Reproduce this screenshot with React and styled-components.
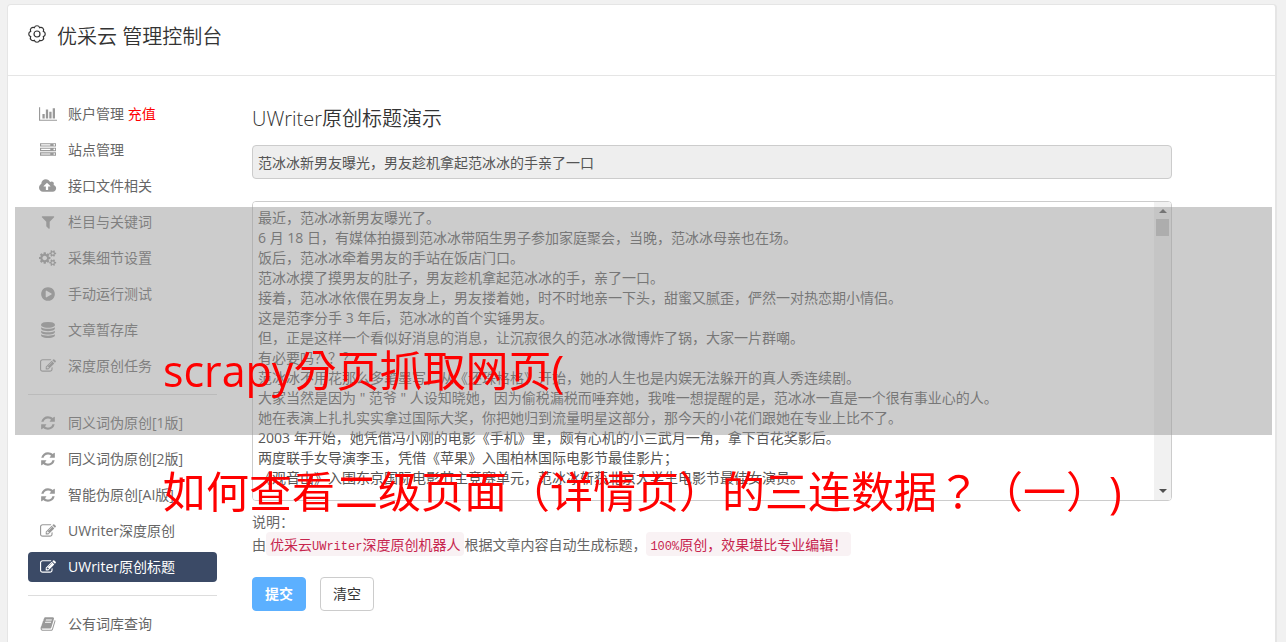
import { useState } from "react";
import styled, { createGlobalStyle, css } from "styled-components";

const ICONS = {
	chart: {
		width: 2048,
		path: "M640 896v512h-256v-512h256zm384-512v1024h-256v-1024h256zm1024 1152v128h-2048v-1536h128v1408h1920zm-640-896v768h-256v-768h256zm384-384v1152h-256v-1152h256z",
	},
	server: {
		width: 1792,
		path: "M128 1408h1024v-128h-1024v128zm0-512h1024v-128h-1024v128zm1568 448q0-40-28-68t-68-28-68 28-28 68 28 68 68 28 68-28 28-68zm-1568-960h1024v-128h-1024v128zm1568 448q0-40-28-68t-68-28-68 28-28 68 28 68 68 28 68-28 28-68zm0-512q0-40-28-68t-68-28-68 28-28 68 28 68 68 28 68-28 28-68zm96 832v384h-1792v-384h1792zm0-512v384h-1792v-384h1792zm0-512v384h-1792v-384h1792z",
	},
	upload: {
		width: 1920,
		path: "M1280 928q0-14-9-23l-352-352q-9-9-23-9t-23 9l-351 351q-10 12-10 24 0 14 9 23t23 9h224v352q0 13 9.5 22.5t22.5 9.5h192q13 0 22.5-9.5t9.5-22.5v-352h224q13 0 22.5-9.5t9.5-22.5zm640 224q0 159-112.5 271.5t-271.5 112.5h-1088q-185 0-316.5-131.5t-131.5-316.5q0-130 70-240t188-165q-2-30-2-43 0-212 150-362t362-150q156 0 285.5 87t188.5 231q71-62 166-62 106 0 181 75t75 181q0 76-41 138 130 31 213.5 135.5t83.5 238.5z",
	},
	filter: {
		width: 1792,
		path: "M1595 295q17 41-14 70l-493 493v742q0 42-39 59-13 5-25 5-27 0-45-19l-256-256q-19-19-19-45v-486l-493-493q-31-29-14-70 17-39 59-39h1280q42 0 59 39z",
	},
	cogs: {
		width: 1920,
		path: "M896 896q0-106-75-181t-181-75-181 75-75 181 75 181 181 75 181-75 75-181zm768 512q0-52-38-90t-90-38-90 38-38 90q0 53 37.5 90.5t90.5 37.5 90.5-37.5 37.5-90.5zm0-1024q0-52-38-90t-90-38-90 38-38 90q0 53 37.5 90.5t90.5 37.5 90.5-37.5 37.5-90.5zm-384 421v185q0 10-7 19.5t-16 10.5l-155 24q-11 35-32 76 34 48 90 115 7 11 7 20 0 12-7 19-23 30-82.5 89.5t-78.5 59.5q-11 0-21-7l-115-90q-37 19-77 31-11 108-23 155-7 24-30 24h-186q-11 0-20-7.5t-10-17.5l-23-153q-34-10-75-31l-118 89q-7 7-20 7-11 0-21-8-144-133-144-160 0-9 7-19 10-14 41-53t47-61q-23-44-35-82l-152-24q-10-1-17-9.5t-7-19.5v-185q0-10 7-19.5t16-10.5l155-24q11-35 32-76-34-48-90-115-7-11-7-20 0-12 7-20 22-30 82-89t79-59q11 0 21 7l115 90q34-18 77-32 11-108 23-154 7-24 30-24h186q11 0 20 7.5t10 17.5l23 153q34 10 75 31l118-89q8-7 20-7 11 0 21 8 144 133 144 160 0 8-7 19-12 16-42 54t-45 60q23 48 34 82l152 23q10 2 17 10.5t7 19.5zm640 533v140q0 16-149 31-12 27-30 52 51 113 51 138 0 4-4 7-122 71-124 71-8 0-46-47t-52-68q-20 2-30 2t-30-2q-14 21-52 68t-46 47q-2 0-124-71-4-3-4-7 0-25 51-138-18-25-30-52-149-15-149-31v-140q0-16 149-31 13-29 30-52-51-113-51-138 0-4 4-7 4-2 35-20t59-34 30-16q8 0 46 46.5t52 67.5q20-2 30-2t30 2q51-71 92-112l6-2q4 0 124 70 4 3 4 7 0 25-51 138 17 23 30 52 149 15 149 31zm0-1024v140q0 16-149 31-12 27-30 52 51 113 51 138 0 4-4 7-122 71-124 71-8 0-46-47t-52-68q-20 2-30 2t-30-2q-14 21-52 68t-46 47q-2 0-124-71-4-3-4-7 0-25 51-138-18-25-30-52-149-15-149-31v-140q0-16 149-31 13-29 30-52-51-113-51-138 0-4 4-7 4-2 35-20t59-34 30-16q8 0 46 46.5t52 67.5q20-2 30-2t30 2q51-71 92-112l6-2q4 0 124 70 4 3 4 7 0 25-51 138 17 23 30 52 149 15 149 31z",
	},
	play: {
		width: 1792,
		path: "M896 128q209 0 385.5 103t279.5 279.5 103 385.5-103 385.5-279.5 279.5-385.5 103-385.5-103-279.5-279.5-103-385.5 103-385.5 279.5-279.5 385.5-103zm384 823q32-18 32-55t-32-55l-544-320q-31-19-64-1-32 19-32 56v640q0 37 32 56 16 8 32 8 17 0 32-9z",
	},
	database: {
		width: 1792,
		path: "M896 768q237 0 443-43t325-127v170q0 69-103 128t-280 93.5-385 34.5-385-34.5-280-93.5-103-128v-170q119 84 325 127t443 43zm0 768q237 0 443-43t325-127v170q0 69-103 128t-280 93.5-385 34.5-385-34.5-280-93.5-103-128v-170q119 84 325 127t443 43zm0-384q237 0 443-43t325-127v170q0 69-103 128t-280 93.5-385 34.5-385-34.5-280-93.5-103-128v-170q119 84 325 127t443 43zm0-1152q208 0 385 34.5t280 93.5 103 128v128q0 69-103 128t-280 93.5-385 34.5-385-34.5-280-93.5-103-128v-128q0-69 103-128t280-93.5 385-34.5z",
	},
	edit: {
		width: 1792,
		path: "M888 1184l116-116-152-152-116 116v56h96v96h56zm440-720q-16-16-33 1l-350 350q-17 17-1 33t33-1l350-350q17-17 1-33zm80 594v190q0 119-84.5 203.5t-203.5 84.5h-832q-119 0-203.5-84.5t-84.5-203.5v-832q0-119 84.5-203.5t203.5-84.5h832q63 0 117 25 15 7 18 23 3 17-9 29l-49 49q-14 14-32 8-23-6-45-6h-832q-66 0-113 47t-47 113v832q0 66 47 113t113 47h832q66 0 113-47t47-113v-126q0-13 9-22l64-64q15-15 35-7t20 29zm-96-738l288 288-672 672h-288v-288zm444 132l-92 92-288-288 92-92q28-28 68-28t68 28l152 152q28 28 28 68t-28 68z",
	},
	refresh: {
		width: 1792,
		path: "M1639 1056q0 5-1 7-64 268-268 434.5t-478 166.5q-146 0-282.5-55t-243.5-157l-129 129q-19 19-45 19t-45-19-19-45v-448q0-26 19-45t45-19h448q26 0 45 19t19 45-19 45l-137 137q71 66 161 102t187 36q134 0 250-65t186-179q11-17 53-117 8-23 30-23h192q13 0 22.5 9.5t9.5 22.5zm25-800v448q0 26-19 45t-45 19h-448q-26 0-45-19t-19-45 19-45l138-138q-148-137-349-137-134 0-250 65t-186 179q-11 17-53 117-8 23-30 23h-199q-13 0-22.5-9.5t-9.5-22.5v-7q65-268 270-434.5t480-166.5q146 0 284 55.5t245 156.5l130-129q19-19 45-19t45 19 19 45z",
	},
	book: {
		width: 1792,
		path: "M1703 478q40 57 18 129l-275 906q-19 64-76.5 107.5t-122.5 43.5h-923q-77 0-148.5-53.5t-99.5-131.5q-24-67-2-127 0-4 3-27t4-37q1-8-3-21.5t-3-19.5q2-11 8-21t16.5-23.5 16.5-23.5q23-38 45-91.5t30-91.5q3-10 .5-30t-.5-28q3-11 17-28t17-23q21-36 42-92t25-90q1-9-2.5-32t.5-28q4-13 22-30.5t22-22.5q19-26 42.5-84.5t27.5-96.5q1-8-3-25.5t-2-26.5q2-8 9-18t18-23 17-21q8-12 16.5-30.5t15-35 16-36 19.5-32 26.5-23.5 36-11.5 47.5 5.5l-1 3q38-9 51-9h761q74 0 114 56t18 130l-274 906q-36 119-71.5 153.5t-128.5 34.5h-869q-27 0-38 15-11 16-1 43 24 70 144 70h923q29 0 56-15.5t35-41.5l300-987q7-22 5-57 38 15 59 43zm-1064 2q-4 13 2 22.5t20 9.5h608q13 0 25.5-9.5t16.5-22.5l21-64q4-13-2-22.5t-20-9.5h-608q-13 0-25.5 9.5t-16.5 22.5zm-83 256q-4 13 2 22.5t20 9.5h608q13 0 25.5-9.5t16.5-22.5l21-64q4-13-2-22.5t-20-9.5h-608q-13 0-25.5 9.5t-16.5 22.5z",
	},
};

const MENU = [
	[
		{ icon: "chart", label: "账户管理", extra: "充值" },
		{ icon: "server", label: "站点管理" },
		{ icon: "upload", label: "接口文件相关" },
		{ icon: "filter", label: "栏目与关键词" },
		{ icon: "cogs", label: "采集细节设置" },
		{ icon: "play", label: "手动运行测试" },
		{ icon: "database", label: "文章暂存库" },
		{ icon: "edit", label: "深度原创任务" },
	],
	[
		{ icon: "refresh", label: "同义词伪原创[1版]" },
		{ icon: "refresh", label: "同义词伪原创[2版]" },
		{ icon: "refresh", label: "智能伪原创[AI版]" },
		{ icon: "edit", label: "UWriter深度原创" },
		{ icon: "edit", label: "UWriter原创标题", active: true },
	],
	[{ icon: "book", label: "公有词库查询" }],
];

const TITLE = "范冰冰新男友曝光，男友趁机拿起范冰冰的手亲了一口";

const ARTICLE = `最近，范冰冰新男友曝光了。
6 月 18 日，有媒体拍摄到范冰冰带陌生男子参加家庭聚会，当晚，范冰冰母亲也在场。
饭后，范冰冰牵着男友的手站在饭店门口。
范冰冰摸了摸男友的肚子，男友趁机拿起范冰冰的手，亲了一口。
接着，范冰冰依偎在男友身上，男友搂着她，时不时地亲一下头，甜蜜又腻歪，俨然一对热恋期小情侣。
这是范李分手 3 年后，范冰冰的首个实锤男友。
但，正是这样一个看似好消息的消息，让沉寂很久的范冰冰微博炸了锅，大家一片群嘲。
有必要吗？？？
范冰冰不用花那么多笔墨写，从《还珠格格》开始，她的人生也是内娱无法躲开的真人秀连续剧。
大家当然是因为 " 范爷 " 人设知晓她，因为偷税漏税而唾弃她，我唯一想提醒的是，范冰冰一直是一个很有事业心的人。
她在表演上扎扎实实拿过国际大奖，你把她归到流量明星这部分，那今天的小花们跟她在专业上比不了。
2003 年开始，她凭借冯小刚的电影《手机》里，颇有心机的小三武月一角，拿下百花奖影后。
两度联手女导演李玉，凭借《苹果》入围柏林国际电影节最佳影片；
《观音山》入围东京国际电影节主竞赛单元，范冰冰斩获北京大学生电影节最佳女演员。
`;

const Icon = ({ name }) => {
	const { width, path } = ICONS[name];
	return (
		<IconBox>
			<svg viewBox={`0 0 ${width} 1792`} height="16" fill="currentColor" aria-hidden="true">
				<path d={path} />
			</svg>
		</IconBox>
	);
};

const GearIcon = () => (
	<svg width="18" height="18" viewBox="0 0 18 18" fill="none" stroke="currentColor" strokeWidth="1.2" aria-hidden="true">
		<path d="M15.37 6.36A2.8 2.8 0 0 1 15.37 11.64A2.8 2.8 0 0 1 11.64 15.37A2.8 2.8 0 0 1 6.36 15.37A2.8 2.8 0 0 1 2.63 11.64A2.8 2.8 0 0 1 2.63 6.36A2.8 2.8 0 0 1 6.36 2.63A2.8 2.8 0 0 1 11.64 2.63A2.8 2.8 0 0 1 15.37 6.36z" />
		<circle cx="9" cy="9" r="3" />
	</svg>
);

const Sidebar = () => (
	<Nav>
		{MENU.map((group, index) => (
			<Group key={index}>
				{group.map(({ icon, label, extra, active }) => (
					<li key={label}>
						<MenuLink href="#" $active={active}>
							<Icon name={icon} />
							<span>
								{label} {extra && <Recharge>{extra}</Recharge>}
							</span>
						</MenuLink>
					</li>
				))}
			</Group>
		))}
	</Nav>
);

const App = () => {
	const [title, setTitle] = useState(TITLE);
	const [article, setArticle] = useState(ARTICLE);

	const handleClear = () => {
		setTitle("");
		setArticle("");
	};

	return (
		<Page>
			<GlobalStyle />
			<Card>
				<Header>
					<GearIcon />
					<SiteTitle>优采云 管理控制台</SiteTitle>
				</Header>
				<Body>
					<Sidebar />
					<Form onSubmit={(e) => e.preventDefault()}>
						<FormTitle>UWriter原创标题演示</FormTitle>
						<TitleInput aria-label="标题" value={title} readOnly />
						<ArticleBox>
							<ArticleInput
								aria-label="文章内容"
								value={article}
								onChange={(e) => setArticle(e.target.value)}
							/>
							<ScrollBar aria-hidden="true">
								<ScrollArrow viewBox="0 0 17 17">
									<path d="M5 11l4-4 4 4z" />
								</ScrollArrow>
								<ScrollThumb />
								<ScrollArrow viewBox="0 0 17 17">
									<path d="M5 6l4 4 4-4z" />
								</ScrollArrow>
							</ScrollBar>
						</ArticleBox>
						<Help>
							<div>说明：</div>
							<div>
								由
								<Code>
									优采云<Mono>UWriter</Mono>深度原创机器人
								</Code>
								根据文章内容自动生成标题，
								<Code>
									<Mono>100%</Mono>原创，效果堪比专业编辑！
								</Code>
							</div>
						</Help>
						<Buttons>
							<SubmitButton type="submit">提交</SubmitButton>
							<ClearButton type="button" onClick={handleClear}>
								清空
							</ClearButton>
						</Buttons>
					</Form>
				</Body>
			</Card>
			<Band />
			<Caption>
				<div>scrapy分页抓取网页(</div>
				<div>如何查看二级页面（详情页）的三连数据？（一）)</div>
			</Caption>
		</Page>
	);
};

const GlobalStyle = createGlobalStyle`
	* {
		box-sizing: border-box;
	}
	body {
		margin: 0;
		background: #f1f1f1;
		color: #666;
		font: 14px/20px "Open Sans", "Noto Sans CJK SC", sans-serif;
		text-spacing-trim: space-all;
	}
	input, textarea, button {
		font: inherit;
		text-spacing-trim: inherit;
	}
`;

const Page = styled.div`
	position: relative;
	height: 100vh;
	overflow: hidden;
	padding: 4px 9px 0 7px;
`;

const Card = styled.div`
	min-height: 100%;
	background: #fff;
	border: 1px solid #e5e5e5;
	border-right-width: 2px;
	border-bottom: 0;
	border-radius: 4px 4px 0 0;
`;

const Header = styled.header`
	display: flex;
	align-items: flex-start;
	gap: 11px;
	height: 71px;
	padding: 20px;
	border-bottom: 1px solid #e5e5e5;
	color: #333;
`;

const SiteTitle = styled.h1`
	margin: 0;
	font-size: 20px;
	font-weight: 350;
	line-height: 24px;
`;

const Body = styled.div`
	display: flex;
	gap: 35px;
	padding: 23px 20px 0;
`;

const Nav = styled.nav`
	flex: 0 0 189px;
`;

const Group = styled.ul`
	display: flex;
	flex-direction: column;
	gap: 6px;
	margin: 0;
	padding: 0;
	list-style: none;
	& + & {
		margin-top: 13px;
		padding-top: 13px;
		border-top: 1px solid #ddd;
	}
`;

const IconBox = styled.span`
	display: flex;
	justify-content: center;
	width: 20px;
	color: #999;
`;

const MenuLink = styled.a`
	display: flex;
	align-items: center;
	gap: 10px;
	height: 30px;
	padding: 0 10px;
	border-radius: 4px;
	color: #666;
	text-decoration: none;
	white-space: nowrap;
	${({ $active }) =>
		$active &&
		css`
			background: #3b4a66;
			color: #fff;
			${IconBox} {
				color: #fff;
			}
		`}
`;

const Recharge = styled.span`
	color: #f00;
`;

const Form = styled.form`
	flex: 1;
	max-width: 920px;
	padding-top: 5px;
`;

const FormTitle = styled.h2`
	margin: 0 0 12px;
	color: #333;
	font-size: 20px;
	font-weight: 350;
	line-height: 29px;
`;

const field = css`
	display: block;
	width: 100%;
	padding: 6px 5px;
	border: 1px solid #ccc;
	border-radius: 4px;
	color: #555;
	outline: none;
`;

const TitleInput = styled.input`
	${field}
	height: 34px;
	background: #eee;
`;

const ArticleBox = styled.div`
	position: relative;
	margin-top: 22px;
`;

const ArticleInput = styled.textarea`
	${field}
	height: 300px;
	padding-right: 22px;
	background: #fff;
	resize: none;
	scrollbar-width: none;
`;

const ScrollBar = styled.div`
	position: absolute;
	top: 1px;
	right: 1px;
	bottom: 1px;
	display: flex;
	flex-direction: column;
	width: 17px;
	border-radius: 0 3px 3px 0;
	background: #f1f1f1;
	pointer-events: none;
`;

const ScrollArrow = styled.svg`
	width: 17px;
	height: 17px;
	fill: #505050;
`;

const ScrollThumb = styled.div`
	height: 17px;
	margin: 0 2px auto;
	background: #c1c1c1;
`;

const Help = styled.div`
	margin-top: 9px;
	line-height: 23px;
`;

const Code = styled.code`
	padding: 2px 4px;
	border-radius: 4px;
	background: #f9f2f4;
	color: #c7254e;
	font: 14px "Noto Sans CJK SC", sans-serif;
	line-height: 14px;
`;

const Mono = styled.span`
	font-family: "Liberation Mono", monospace;
	font-size: 12px;
`;

const Buttons = styled.div`
	display: flex;
	gap: 14px;
	margin-top: 21px;
`;

const Button = styled.button`
	height: 34px;
	padding: 6px 12px;
	border-radius: 4px;
	cursor: pointer;
`;

const SubmitButton = styled(Button)`
	border: 1px solid #5cb0ff;
	background: #5cb0ff;
	color: #fff;
	font-weight: 700;
`;

const ClearButton = styled(Button)`
	border: 1px solid #ccc;
	background: #fff;
	color: #333;
`;

const Band = styled.div`
	position: absolute;
	top: 207px;
	right: 14px;
	left: 15px;
	height: 228px;
	background: rgba(153, 153, 153, 0.5);
	pointer-events: none;
`;

const Caption = styled.div`
	position: absolute;
	top: 310px;
	left: 163px;
	color: #f00;
	font-family: "Open Sans", "Noto Sans CJK TC", sans-serif;
	font-size: 43px;
	line-height: 121px;
	white-space: nowrap;
	pointer-events: none;
`;

export default App;
